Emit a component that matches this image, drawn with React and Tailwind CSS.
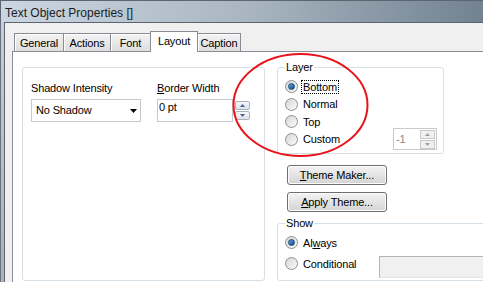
import React from 'react';

const Radio = ({ checked }) => (
  <span className="flex h-[13px] w-[13px] shrink-0 items-center justify-center rounded-full border border-[#8e8f8f] bg-gradient-to-br from-[#d6d6d6] to-[#fbfbfb]">
    {checked && (
      <span className="h-[7px] w-[7px] rounded-full border border-[#17497a] bg-gradient-to-br from-[#5aa8e6] to-[#0f4d86]" />
    )}
  </span>
);

const Spin = ({ disabled }) => {
  const arrow = disabled ? '#a0a0a0' : '#4d5f8f';
  const btn = disabled
    ? 'flex h-[9px] items-center justify-center border border-[#c8c8c8] bg-[#f0f0f0]'
    : 'flex h-[9px] items-center justify-center rounded-[2px] border border-[#aab2c0] bg-gradient-to-b from-[#f4f6f9] to-[#dde3ea]';
  return (
    <div className="flex w-[15px] flex-col gap-[1px]">
      <div className={btn}>
        <svg width="5" height="3" viewBox="0 0 5 3"><path d="M2.5 0L5 3H0z" fill={arrow} /></svg>
      </div>
      <div className={btn}>
        <svg width="5" height="3" viewBox="0 0 5 3"><path d="M0 0H5L2.5 3z" fill={arrow} /></svg>
      </div>
    </div>
  );
};

const App = () => {
  return (
    <div className="relative h-[282px] w-[483px] overflow-hidden bg-[#c3cdd7] font-['Liberation_Sans',Arial,sans-serif] text-[11px] leading-[13px] tracking-[-0.15px] text-black">
      {/* Title bar */}
      <div className="h-[22px] border-l border-t border-[#5d6670] bg-gradient-to-r from-[#cad6e2] via-[#aab7c3] to-[#728290] pl-[4px] pt-[2px] text-[12px] leading-[20px] tracking-normal text-[#1c1c1c]">
        Text Object Properties []
      </div>

      <div className="flex h-[260px]">
        {/* window frame */}
        <div className="w-[4px] shrink-0 border-l border-[#6a747e] bg-gradient-to-b from-[#c5cfd9] to-[#a9b1b9]" />

        {/* client area */}
        <div className="min-w-0 flex-1 border-l border-t border-[#5d6670] bg-[#f0f0f0] pl-[7px] pt-[8px]">
          {/* tabs */}
          <div className="relative z-10 -mb-[1px] flex h-[21px] items-end pl-[2px]">
            <div className="mb-[1px] h-[18px] w-[49px] border-l border-t border-[#898c95] bg-gradient-to-b from-[#f3f3f3] to-[#dedede] pt-[3px] text-center shadow-[inset_1px_1px_0_#fff]">General</div>
            <div className="mb-[1px] h-[18px] w-[47px] border-l border-t border-[#898c95] bg-gradient-to-b from-[#f3f3f3] to-[#dedede] pt-[3px] text-center shadow-[inset_1px_1px_0_#fff]">Actions</div>
            <div className="mb-[1px] h-[18px] w-[40px] border-l border-t border-[#898c95] bg-gradient-to-b from-[#f3f3f3] to-[#dedede] pt-[3px] text-center shadow-[inset_1px_1px_0_#fff]">Font</div>
            <div className="h-[21px] w-[48px] border-l border-r border-t border-[#898c95] bg-white pt-[3px] text-center">Layout</div>
            <div className="mb-[1px] h-[18px] w-[43px] border-r border-t border-[#898c95] bg-gradient-to-b from-[#f3f3f3] to-[#dedede] pt-[3px] text-center shadow-[inset_1px_1px_0_#fff]">Caption</div>
          </div>

          {/* tab panel */}
          <div className="flex h-[240px] w-[520px] border border-[#898c95] bg-white pl-[9px] pt-[15px]">
            {/* left group */}
            <div className="h-[214px] w-[243px] shrink-0 rounded-[3px] border border-[#d5dfe5] px-[8px] pt-[14px]">
              <div className="flex gap-[16px]">
                <div className="w-[110px]">
                  <div>Shadow Intensity</div>
                  <div className="mt-[4px] flex h-[23px] items-center border border-[#c5c9cf] bg-white pl-[4px] pr-[3px]">
                    <span className="flex-1">No Shadow</span>
                    <svg width="7" height="4" viewBox="0 0 7 4"><path d="M0 0H7L3.5 4z" fill="#000" /></svg>
                  </div>
                </div>
                <div>
                  <div><span className="underline">B</span>order Width</div>
                  <div className="mt-[4px] flex items-start">
                    <div className="h-[23px] w-[76px] border border-[#c5c9cf] bg-white pl-[1px] pt-[1px]">0 pt</div>
                    <div className="ml-[2px] mt-[2px]"><Spin /></div>
                  </div>
                </div>
              </div>
            </div>

            {/* right column */}
            <div className="-mt-[7px] ml-[12px] flex shrink-0 flex-col">
              <fieldset className="h-[94px] w-[167px] rounded-[3px] border border-[#d5dfe5] pl-[7px] pr-[6px]">
                <legend className="px-[1px] leading-[14px]">Layer</legend>
                <div className="pt-[4px]">
                  <div className="flex h-[17.5px] items-center">
                    <Radio checked />
                    <span className="ml-[3px] border border-dotted border-black px-[1px] leading-[12px]">Bottom</span>
                  </div>
                  <div className="flex h-[17.5px] items-center">
                    <Radio />
                    <span className="ml-[3px] border border-transparent px-[1px] leading-[12px]">Normal</span>
                  </div>
                  <div className="flex h-[17.5px] items-center">
                    <Radio />
                    <span className="ml-[3px] border border-transparent px-[1px] leading-[12px]">Top</span>
                  </div>
                  <div className="flex h-[17.5px] items-center">
                    <Radio />
                    <span className="ml-[3px] border border-transparent px-[1px] leading-[12px]">Custom</span>
                    <div className="ml-auto flex h-[22px] w-[44px] shrink-0 items-center border border-[#c9c9c9] bg-white pl-[2px] pr-[1px]">
                      <span className="flex-1 text-[#8a8a8a]">-1</span>
                      <Spin disabled />
                    </div>
                  </div>
                </div>
              </fieldset>

              <div className="ml-[10px] mt-[11px] flex flex-col gap-[7px]">
                <div className="h-[20px] w-[100px] rounded-[3px] border border-[#707070] bg-gradient-to-b from-[#f3f3f3] to-[#d4d4d4] text-center leading-[18px] shadow-[inset_0_0_0_1px_#fcfcfc]">
                  <span className="underline">T</span>heme Maker...
                </div>
                <div className="h-[20px] w-[100px] rounded-[3px] border border-[#707070] bg-gradient-to-b from-[#f3f3f3] to-[#d4d4d4] text-center leading-[18px] shadow-[inset_0_0_0_1px_#fcfcfc]">
                  <span className="underline">A</span>pply Theme...
                </div>
              </div>

              <fieldset className="mt-[4px] h-[65px] w-[230px] rounded-[3px] border border-[#d5dfe5] pl-[7px]">
                <legend className="px-[1px] leading-[14px]">Show</legend>
                <div className="pt-[4px]">
                  <div className="flex h-[17.5px] items-center">
                    <Radio checked />
                    <span className="ml-[3px] border border-transparent px-[1px] leading-[12px]">Al<span className="underline">w</span>ays</span>
                  </div>
                  <div className="mt-[3.5px] flex items-start">
                    <div className="flex h-[17.5px] w-[94px] items-center">
                      <Radio />
                      <span className="ml-[3px] border border-transparent px-[1px] leading-[12px]">Conditional</span>
                    </div>
                    <div className="mt-[1px] h-[22px] w-[130px] border border-[#b4b4b4] border-b-[#e2e2e2] bg-[#f0f0f0]" />
                  </div>
                </div>
              </fieldset>
            </div>
          </div>
        </div>
      </div>

      {/* annotation */}
      <svg className="pointer-events-none absolute left-0 top-0" width="483" height="282">
        <ellipse cx="300.5" cy="105" rx="67" ry="51" fill="none" stroke="#e8141b" strokeWidth="2" />
      </svg>
    </div>
  );
};

export default App;
